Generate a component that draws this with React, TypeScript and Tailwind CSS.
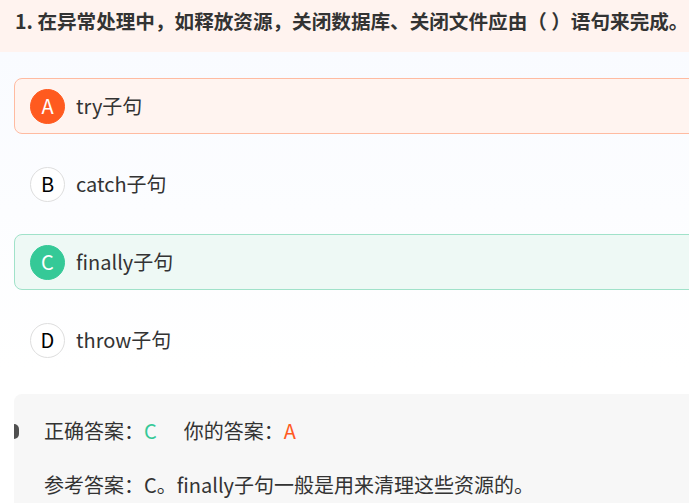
import React from 'react';

type Option = {
  key: string;
  text: string;
  state: 'wrong' | 'right' | 'none';
};

const options: Option[] = [
  { key: 'A', text: 'try子句', state: 'wrong' },
  { key: 'B', text: 'catch子句', state: 'none' },
  { key: 'C', text: 'finally子句', state: 'right' },
  { key: 'D', text: 'throw子句', state: 'none' },
];

const font = { fontFamily: '"Noto Sans CJK SC", "Noto Sans", sans-serif' };

const OptionRow = ({ item }: { item: Option }) => {
  const box =
    item.state === 'wrong'
      ? 'border-[#ffbba1] bg-[#fff4f0]'
      : item.state === 'right'
        ? 'border-[#a0e2c9] bg-[#eef9f5]'
        : 'border-transparent bg-transparent';
  const circle =
    item.state === 'wrong'
      ? 'bg-[#ff5a1f] text-white border-[#ff5a1f]'
      : item.state === 'right'
        ? 'bg-[#35c997] text-white border-[#35c997]'
        : 'bg-white text-black border-[#dedede]';

  return (
    <div className={`flex h-[56px] items-center rounded-lg border pl-[15px] ${box}`}>
      <div
        className={`flex h-[35px] w-[35px] shrink-0 items-center justify-center rounded-full border text-[20px] ${circle}`}
      >
        {item.key}
      </div>
      <span className="ml-[11px] text-[20px] text-[#333]">{item.text}</span>
    </div>
  );
};

export default function App() {
  return (
    <div className="h-[503px] w-[689px] overflow-hidden bg-[#fcfdff]" style={font}>
      <div className="w-[760px]">
        <div className="h-[52px] bg-[#fff3ef] pl-[15px] pt-[7px]">
          <h2 className="w-max whitespace-nowrap text-[19.6px] font-bold leading-[28px] text-[#333]">
            1. 在异常处理中，如释放资源，关闭数据库、关闭文件应由（ ）语句来完成。
          </h2>
        </div>

        <div className="flex flex-col gap-[22px] bg-gradient-to-b from-[#f9fbff] to-white pl-[14px] pt-[26px]">
          {options.map((item) => (
            <OptionRow key={item.key} item={item} />
          ))}
        </div>

        <div className="bg-white pl-[14px] pt-[26px]">
          <div className="relative h-[200px] rounded-lg bg-[#f7f7f7] pl-[30px] pt-[23px] text-[20px] text-[#333]">
            <div className="absolute left-0 top-[30px] h-[15px] w-[5px] rounded-r-full bg-[#505050]" />
            <div className="flex h-[28px] items-center">
              <span>正确答案：</span>
              <span className="text-[#35c997]">C</span>
              <span className="ml-[27px]">你的答案：</span>
              <span className="text-[#ff5a1f]">A</span>
            </div>
            <div className="mt-[26px] flex h-[28px] items-center">
              参考答案：C。finally子句一般是用来清理这些资源的。
            </div>
          </div>
        </div>
      </div>
    </div>
  );
}
